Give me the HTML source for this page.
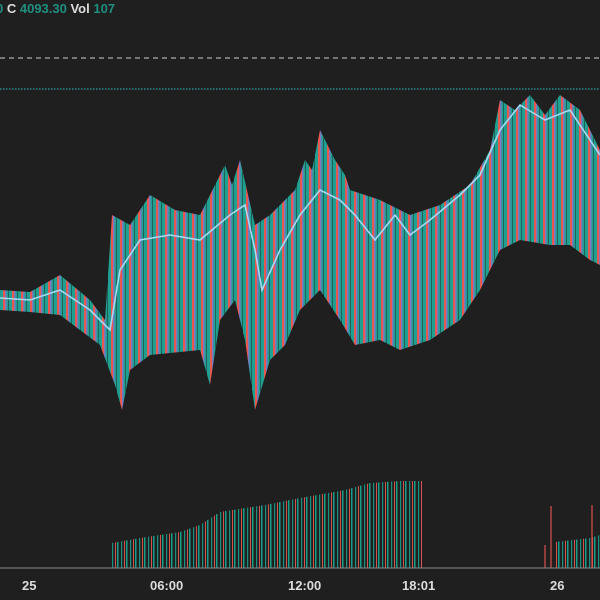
<!DOCTYPE html><html><head><style>
body{margin:0;background:#1f1f1f;width:600px;height:600px;overflow:hidden;font-family:"Liberation Sans",sans-serif}
.h{position:absolute;top:1px;left:-4px;font-size:13px;font-weight:bold;color:#ddd;white-space:pre}
.g{color:#1f8f80}
.l{position:absolute;top:578px;font-size:13px;font-weight:bold;color:#ddd}
</style></head><body>
<svg width="600" height="600" style="position:absolute;left:0;top:0">
<defs>
<pattern id="p" width="9" height="10" patternUnits="userSpaceOnUse">
<rect width="9" height="10" fill="#1f1f1f"/>
<rect x="0" width="3" height="10" fill="#1fa090"/>
<rect x="3" width="2" height="10" fill="#e8584f"/>
<rect x="5" width="1.5" height="10" fill="#7a78c0"/>
<rect x="6.5" width="2" height="10" fill="#1fa090"/>
</pattern>
<pattern id="v" width="9" height="10" patternUnits="userSpaceOnUse">
<rect x="0" width="1.5" height="10" fill="#159e88"/>
<rect x="4" width="1.2" height="10" fill="#1a9080"/>
<rect x="7" width="1" height="10" fill="#d8524c"/>
</pattern>
</defs>
<line x1="0" y1="58" x2="600" y2="58" stroke="#aaa" stroke-dasharray="5,4" stroke-width="1.2"/>
<line x1="0" y1="89" x2="600" y2="89" stroke="#2aa0a0" stroke-dasharray="1.5,1.5" stroke-width="1.2"/>
<polygon fill="url(#p)" points="0,290 30,292 60,275 90,300 105,320 112,215 130,225 150,195 175,210 200,215 225,165 232,185 240,160 255,225 270,215 295,190 305,160 312,170 320,130 335,160 345,175 350,190 380,200 410,215 440,205 470,185 490,150 500,100 515,110 530,95 545,115 560,95 580,110 600,150 600,265 590,260 570,245 550,245 520,240 500,250 480,290 460,320 430,340 400,350 380,340 355,345 340,320 320,290 300,310 285,345 270,360 255,410 245,340 235,300 220,320 210,385 200,350 150,355 130,370 122,410 115,385 100,345 60,315 30,312 0,310"/>
<polyline fill="none" stroke="#a8d8f5" stroke-width="1.6" points="0,298 30,300 60,290 90,310 110,330 120,270 140,240 170,235 200,240 230,215 245,205 255,250 262,290 280,250 300,215 320,190 340,200 355,215 375,240 395,215 410,235 430,220 460,195 480,175 500,130 520,105 545,120 570,110 590,140 600,155"/>
<polygon fill="url(#v)" points="112,543 140,538 180,532 200,525 220,512 245,508 265,505 300,498 345,490 370,483 400,481 422,481 422,568 112,568"/>
<polygon fill="url(#v)" points="555,542 590,538 600,535 600,568 555,568"/>
<line x1="551" y1="506" x2="551" y2="568" stroke="#d8524c" stroke-width="1.2"/>
<line x1="592" y1="505" x2="592" y2="568" stroke="#d8524c" stroke-width="1.2"/>
<line x1="545" y1="545" x2="545" y2="568" stroke="#d8524c" stroke-width="1.2"/>
<line x1="0" y1="568" x2="600" y2="568" stroke="#888" stroke-width="1"/>
</svg>
<div class="h"><span class="g">0</span> C <span class="g">4093.30</span> Vol <span class="g">107</span></div>
<div class="l" style="left:22px">25</div>
<div class="l" style="left:150px">06:00</div>
<div class="l" style="left:288px">12:00</div>
<div class="l" style="left:402px">18:01</div>
<div class="l" style="left:550px">26</div>
</body></html>
